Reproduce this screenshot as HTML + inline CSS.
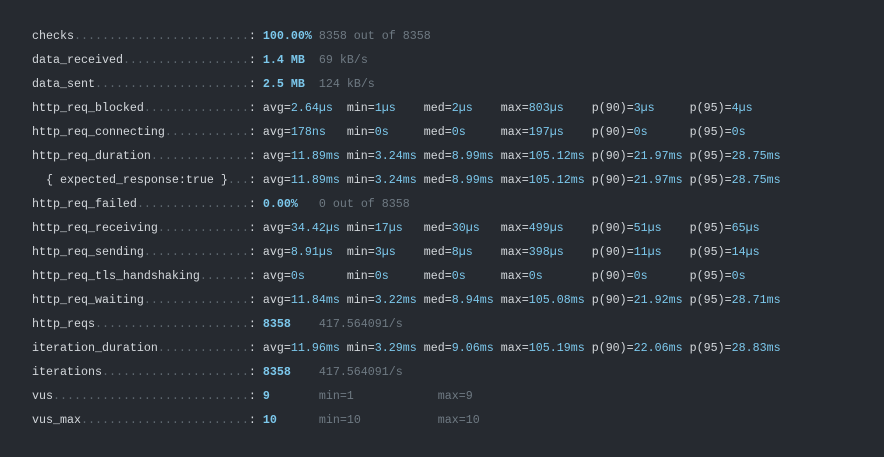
<!DOCTYPE html>
<html><head><meta charset="utf-8"><style>
html,body{margin:0;padding:0;background:#262a30;width:884px;height:457px;overflow:hidden}
pre{margin:0;padding:24px 0 0 32px;font-family:"Liberation Mono","DejaVu Sans Mono",monospace;font-size:11.67px;line-height:24px;color:#d3d7db}
.d{color:#5d666e}.c{color:#7cc8ec}.b{color:#7cc8ec;font-weight:bold}.g{color:#6f7a83}
</style></head><body><pre>checks<span class="d">.........................</span>: <span class="b">100.00%</span> <span class="g">8358 out of 8358</span>
data_received<span class="d">..................</span>: <span class="b">1.4 MB</span>  <span class="g">69 kB/s</span>
data_sent<span class="d">......................</span>: <span class="b">2.5 MB</span>  <span class="g">124 kB/s</span>
http_req_blocked<span class="d">...............</span>: avg=<span class="c">2.64µs</span>  min=<span class="c">1µs</span>    med=<span class="c">2µs</span>    max=<span class="c">803µs</span>    p(90)=<span class="c">3µs</span>     p(95)=<span class="c">4µs</span>
http_req_connecting<span class="d">............</span>: avg=<span class="c">178ns</span>   min=<span class="c">0s</span>     med=<span class="c">0s</span>     max=<span class="c">197µs</span>    p(90)=<span class="c">0s</span>      p(95)=<span class="c">0s</span>
http_req_duration<span class="d">..............</span>: avg=<span class="c">11.89ms</span> min=<span class="c">3.24ms</span> med=<span class="c">8.99ms</span> max=<span class="c">105.12ms</span> p(90)=<span class="c">21.97ms</span> p(95)=<span class="c">28.75ms</span>
  { expected_response:true }<span class="d">...</span>: avg=<span class="c">11.89ms</span> min=<span class="c">3.24ms</span> med=<span class="c">8.99ms</span> max=<span class="c">105.12ms</span> p(90)=<span class="c">21.97ms</span> p(95)=<span class="c">28.75ms</span>
http_req_failed<span class="d">................</span>: <span class="b">0.00%</span>   <span class="g">0 out of 8358</span>
http_req_receiving<span class="d">.............</span>: avg=<span class="c">34.42µs</span> min=<span class="c">17µs</span>   med=<span class="c">30µs</span>   max=<span class="c">499µs</span>    p(90)=<span class="c">51µs</span>    p(95)=<span class="c">65µs</span>
http_req_sending<span class="d">...............</span>: avg=<span class="c">8.91µs</span>  min=<span class="c">3µs</span>    med=<span class="c">8µs</span>    max=<span class="c">398µs</span>    p(90)=<span class="c">11µs</span>    p(95)=<span class="c">14µs</span>
http_req_tls_handshaking<span class="d">.......</span>: avg=<span class="c">0s</span>      min=<span class="c">0s</span>     med=<span class="c">0s</span>     max=<span class="c">0s</span>       p(90)=<span class="c">0s</span>      p(95)=<span class="c">0s</span>
http_req_waiting<span class="d">...............</span>: avg=<span class="c">11.84ms</span> min=<span class="c">3.22ms</span> med=<span class="c">8.94ms</span> max=<span class="c">105.08ms</span> p(90)=<span class="c">21.92ms</span> p(95)=<span class="c">28.71ms</span>
http_reqs<span class="d">......................</span>: <span class="b">8358</span>    <span class="g">417.564091/s</span>
iteration_duration<span class="d">.............</span>: avg=<span class="c">11.96ms</span> min=<span class="c">3.29ms</span> med=<span class="c">9.06ms</span> max=<span class="c">105.19ms</span> p(90)=<span class="c">22.06ms</span> p(95)=<span class="c">28.83ms</span>
iterations<span class="d">.....................</span>: <span class="b">8358</span>    <span class="g">417.564091/s</span>
vus<span class="d">............................</span>: <span class="b">9</span>       <span class="g">min=1</span>            <span class="g">max=9</span>
vus_max<span class="d">........................</span>: <span class="b">10</span>      <span class="g">min=10</span>           <span class="g">max=10</span></pre></body></html>
